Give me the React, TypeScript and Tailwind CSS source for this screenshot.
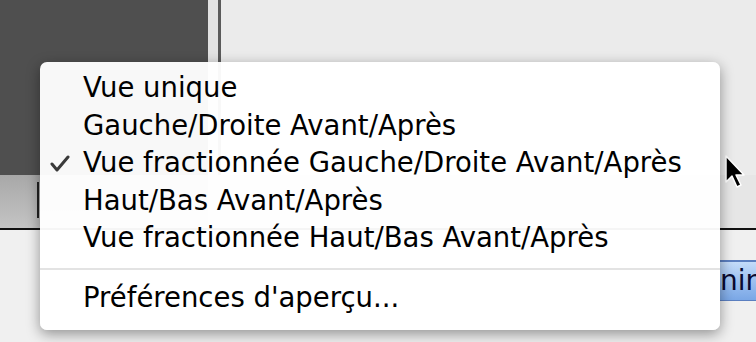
import React from "react";

const items = [
  "Vue unique",
  "Gauche/Droite Avant/Après",
  "Vue fractionnée Gauche/Droite Avant/Après",
  "Haut/Bas Avant/Après",
  "Vue fractionnée Haut/Bas Avant/Après",
];

export default function App() {
  return (
    <div className="relative w-[756px] h-[342px] overflow-hidden bg-[#ebebeb]" style={{ fontFamily: '"Lucida Grande", "DejaVu Sans", sans-serif' }}>
      {/* background */}
      <div className="flex flex-col h-full">
        <div className="flex h-[175px]">
          <div className="w-[208px] bg-[#4f4f4f]" />
          <div className="w-[10px] bg-[#e2e2e2]" />
          <div className="w-[3px] bg-[#5a5a5a]" />
          <div className="flex-1 bg-[#ebebeb]" />
        </div>
        <div className="flex h-[53px]">
          <div className="w-[208px] bg-gradient-to-b from-[#a8a8a8] to-[#c4c4c4] flex">
            <div className="ml-[37px] mt-[7px] w-[2px] h-[36px] bg-[#222]" />
          </div>
          <div className="flex-1 bg-[#e6e6e6]" />
        </div>
        <div className="h-[2px] bg-[#111]" />
        <div className="flex-1 bg-[#f0f0f0] flex justify-end items-start pt-[30px]">
          <div className="w-[36px] h-[41px] bg-gradient-to-b from-[#c4dcfa] via-[#9cc0f0] to-[#7aa7e6] border-t-2 border-b border-[#5b7fc0] text-[28px] leading-[38px] text-[#0a0a30] overflow-hidden whitespace-nowrap">nine</div>
        </div>
      </div>

      {/* cursor */}
      <svg className="absolute left-[724px] top-[154px]" width="24" height="38" viewBox="0 0 24 38">
        <path d="M2 2 L2 28 L8 22 L13 33 L17 31 L12 21 L20 21 Z" fill="#000" stroke="#fff" strokeWidth="1.5" strokeLinejoin="round" />
      </svg>

      {/* menu */}
      <div className="absolute left-[40px] top-[62px] w-[680px] h-[268px] rounded-[7px] bg-[rgba(255,255,255,0.96)] shadow-[0_4px_14px_rgba(0,0,0,0.4)] pt-[7px]">
        {items.map((t, i) => (
          <div key={t} className="relative h-[37.5px] leading-[37.5px] pl-[43px] text-[27.5px] text-black whitespace-nowrap">
            {i === 2 && (
              <svg className="absolute left-[10px] top-[11px]" width="20" height="18" viewBox="0 0 20 18">
                <path d="M2 9 L7 15 L18 2" fill="none" stroke="#3a3a3a" strokeWidth="3" strokeLinecap="round" strokeLinejoin="round" />
              </svg>
            )}
            {t}
          </div>
        ))}
        <div className="mt-[11px] mb-[9px] h-[2px] bg-[#e3e3e3]" />
        <div className="h-[37.5px] leading-[37.5px] pl-[43px] text-[27.5px] text-black whitespace-nowrap">Préférences d'aperçu...</div>
      </div>
    </div>
  );
}
